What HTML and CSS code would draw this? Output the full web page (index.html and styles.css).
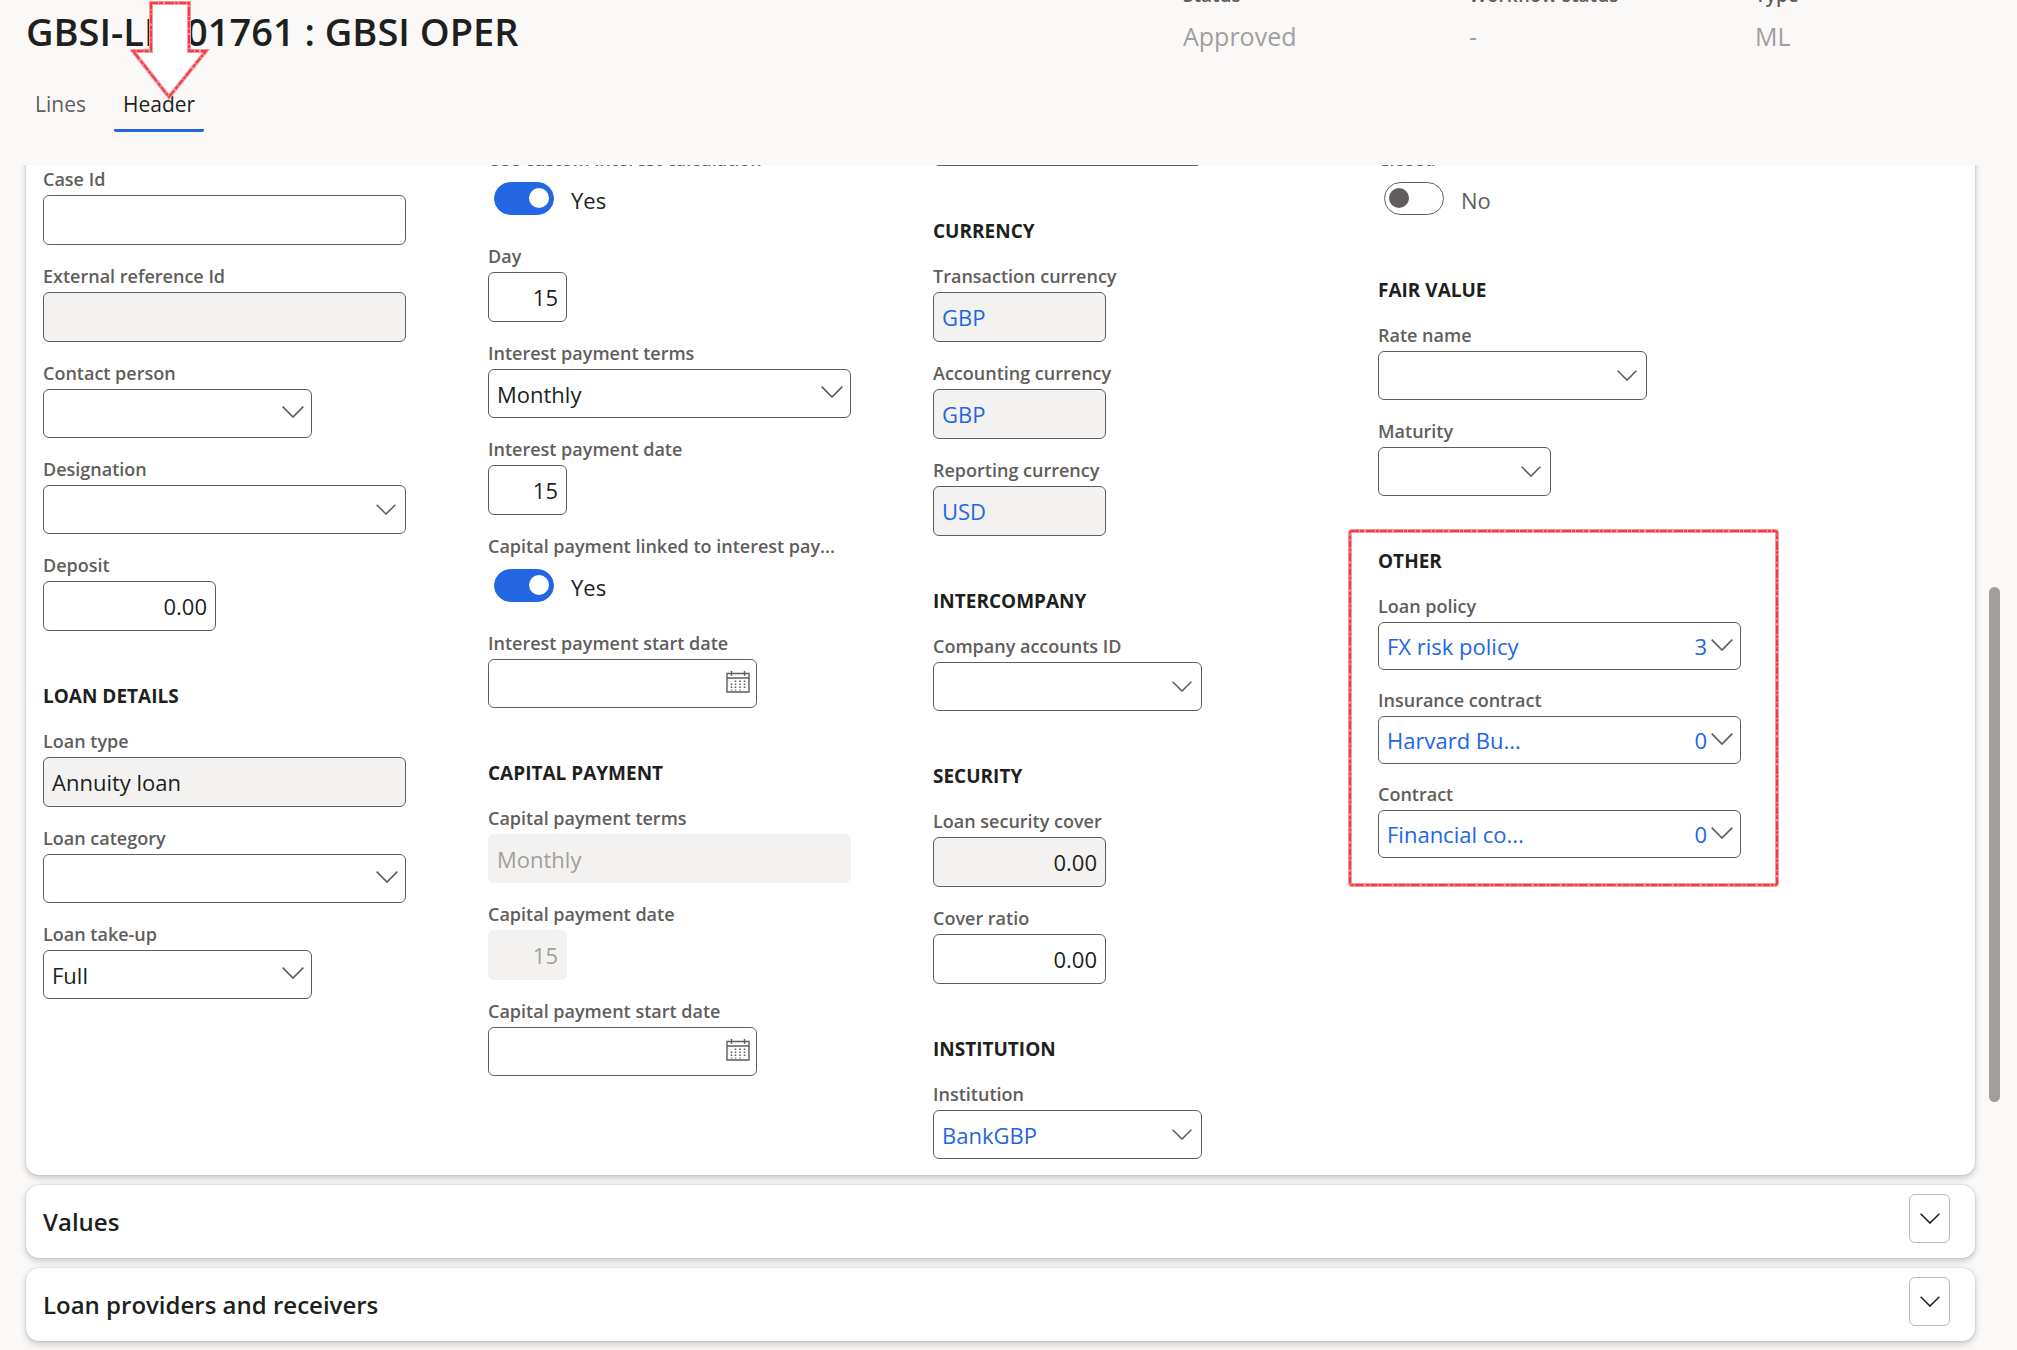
FILE: index.html
```html
<!DOCTYPE html>
<html lang="en">

<head>
    <meta charset="UTF-8">
    <meta name="viewport" content="width=device-width, initial-scale=1.0">
    <title>GBSI-LN-01761 : GBSI OPER</title>
    <link rel="stylesheet" href="styles.css">
</head>

<body>
    <!-- shared icons -->
    <svg class="icon-defs" aria-hidden="true">
        <symbol id="chevron" viewBox="0 0 22 12">
            <path d="M.7 .7 11 11 21.3 .7" fill="none" stroke="currentColor" stroke-width="1.7" />
        </symbol>
        <symbol id="calendar" viewBox="0 0 24 22">
            <path d="M1 2.5h22v18.5H1zM1 7h22M5.5 0v5M18.5 0v5" fill="none" stroke="currentColor" stroke-width="1.4" />
            <path d="M9.5 9.5v10M14 9.5v10M18.5 9.5v7.5M5.5 12.5v7" fill="none" stroke="currentColor" stroke-width="1.6" stroke-dasharray="1.6 1.4" />
        </symbol>
    </svg>

    <header class="page-header">
        <div class="title-row">
            <h1 class="page-title">GBSI-LN-01761 : GBSI OPER</h1>
            <dl class="stats">
                <div class="stat">
                    <dt>Status</dt>
                    <dd>Approved</dd>
                </div>
                <div class="stat">
                    <dt>Workflow status</dt>
                    <dd>-</dd>
                </div>
                <div class="stat">
                    <dt>Type</dt>
                    <dd>ML</dd>
                </div>
            </dl>
        </div>
        <nav class="tabs">
            <a class="tab" href="#lines">Lines</a>
            <a class="tab tab-active" href="#header">Header</a>
        </nav>
        <svg class="arrow" viewBox="0 0 80 102" aria-hidden="true">
            <path class="sketch-base" d="M21 3h38v48h17L39 97 3 51h18z" />
            <path class="sketch-line" d="M21 3h38v48h17L39 97 3 51h18z" />
        </svg>
    </header>

    <main class="page-body">
        <section class="card card-form">
            <div class="column column-loan">
                <div class="group">
                    <div class="field">
                        <label for="case-id">Case Id</label>
                        <input class="box" id="case-id" type="text">
                    </div>
                    <div class="field">
                        <label for="external-id">External reference Id</label>
                        <input class="box" id="external-id" type="text" readonly>
                    </div>
                    <div class="field">
                        <label for="contact">Contact person</label>
                        <div class="picker w-medium">
                            <select class="box" id="contact"><option></option></select>
                            <svg class="chevron"><use href="#chevron" /></svg>
                        </div>
                    </div>
                    <div class="field">
                        <label for="designation">Designation</label>
                        <div class="picker picker-lookup">
                            <select class="box" id="designation"><option></option></select>
                            <svg class="chevron"><use href="#chevron" /></svg>
                        </div>
                    </div>
                    <div class="field">
                        <label for="deposit">Deposit</label>
                        <input class="box number w-small" id="deposit" type="text" value="0.00">
                    </div>
                </div>
                <div class="group">
                    <h2>LOAN DETAILS</h2>
                    <div class="field">
                        <label for="loan-type">Loan type</label>
                        <input class="box" id="loan-type" type="text" value="Annuity loan" readonly>
                    </div>
                    <div class="field">
                        <label for="loan-category">Loan category</label>
                        <div class="picker">
                            <select class="box" id="loan-category"><option></option></select>
                            <svg class="chevron"><use href="#chevron" /></svg>
                        </div>
                    </div>
                    <div class="field">
                        <label for="take-up">Loan take-up</label>
                        <div class="picker w-medium">
                            <select class="box" id="take-up"><option>Full</option></select>
                            <svg class="chevron"><use href="#chevron" /></svg>
                        </div>
                    </div>
                </div>
            </div>

            <div class="column column-payment">
                <div class="group">
                    <div class="field">
                        <label for="custom-interest">Use custom interest calculation</label>
                        <div class="toggle">
                            <input id="custom-interest" type="checkbox" checked>
                            <span>Yes</span>
                        </div>
                    </div>
                    <div class="field">
                        <label for="day">Day</label>
                        <input class="box number w-tiny" id="day" type="text" value="15">
                    </div>
                    <div class="field">
                        <label for="interest-terms">Interest payment terms</label>
                        <div class="picker">
                            <select class="box" id="interest-terms"><option>Monthly</option></select>
                            <svg class="chevron"><use href="#chevron" /></svg>
                        </div>
                    </div>
                    <div class="field">
                        <label for="interest-date">Interest payment date</label>
                        <input class="box number w-tiny" id="interest-date" type="text" value="15">
                    </div>
                    <div class="field">
                        <label for="linked">Capital payment linked to interest pay...</label>
                        <div class="toggle">
                            <input id="linked" type="checkbox" checked>
                            <span>Yes</span>
                        </div>
                    </div>
                    <div class="field">
                        <label for="interest-start">Interest payment start date</label>
                        <div class="picker w-medium">
                            <input class="box" id="interest-start" type="text">
                            <button class="calendar" type="button" aria-label="Choose date"><svg><use href="#calendar" /></svg></button>
                        </div>
                    </div>
                </div>
                <div class="group">
                    <h2>CAPITAL PAYMENT</h2>
                    <div class="field">
                        <label for="capital-terms">Capital payment terms</label>
                        <select class="box" id="capital-terms" disabled><option>Monthly</option></select>
                    </div>
                    <div class="field">
                        <label for="capital-date">Capital payment date</label>
                        <input class="box number w-tiny" id="capital-date" type="text" value="15" disabled>
                    </div>
                    <div class="field">
                        <label for="capital-start">Capital payment start date</label>
                        <div class="picker w-medium">
                            <input class="box" id="capital-start" type="text">
                            <button class="calendar" type="button" aria-label="Choose date"><svg><use href="#calendar" /></svg></button>
                        </div>
                    </div>
                </div>
            </div>

            <div class="column">
                <div class="group">
                    <div class="field">
                        <div class="picker picker-lookup w-medium">
                            <input class="box" type="text" aria-label="Lookup">
                        </div>
                    </div>
                </div>
                <div class="group">
                    <h2>CURRENCY</h2>
                    <div class="field">
                        <label for="transaction-currency">Transaction currency</label>
                        <input class="box link w-small" id="transaction-currency" type="text" value="GBP" readonly>
                    </div>
                    <div class="field">
                        <label for="accounting-currency">Accounting currency</label>
                        <input class="box link w-small" id="accounting-currency" type="text" value="GBP" readonly>
                    </div>
                    <div class="field">
                        <label for="reporting-currency">Reporting currency</label>
                        <input class="box link w-small" id="reporting-currency" type="text" value="USD" readonly>
                    </div>
                </div>
                <div class="group">
                    <h2>INTERCOMPANY</h2>
                    <div class="field">
                        <label for="company">Company accounts ID</label>
                        <div class="picker picker-lookup w-medium">
                            <select class="box" id="company"><option></option></select>
                            <svg class="chevron"><use href="#chevron" /></svg>
                        </div>
                    </div>
                </div>
                <div class="group">
                    <h2>SECURITY</h2>
                    <div class="field">
                        <label for="security-cover">Loan security cover</label>
                        <input class="box number w-small" id="security-cover" type="text" value="0.00" readonly>
                    </div>
                    <div class="field">
                        <label for="cover-ratio">Cover ratio</label>
                        <input class="box number w-small" id="cover-ratio" type="text" value="0.00">
                    </div>
                </div>
                <div class="group">
                    <h2>INSTITUTION</h2>
                    <div class="field">
                        <label for="institution">Institution</label>
                        <div class="picker picker-lookup w-medium">
                            <select class="box link" id="institution"><option>BankGBP</option></select>
                            <svg class="chevron"><use href="#chevron" /></svg>
                        </div>
                    </div>
                </div>
            </div>

            <div class="column column-payment">
                <div class="group">
                    <div class="field">
                        <label for="closed">Closed</label>
                        <div class="toggle">
                            <input id="closed" type="checkbox">
                            <span>No</span>
                        </div>
                    </div>
                </div>
                <div class="group">
                    <h2>FAIR VALUE</h2>
                    <div class="field">
                        <label for="rate-name">Rate name</label>
                        <div class="picker picker-lookup w-medium">
                            <select class="box" id="rate-name"><option></option></select>
                            <svg class="chevron"><use href="#chevron" /></svg>
                        </div>
                    </div>
                    <div class="field">
                        <label for="maturity">Maturity</label>
                        <div class="picker picker-lookup w-small">
                            <select class="box" id="maturity"><option></option></select>
                            <svg class="chevron"><use href="#chevron" /></svg>
                        </div>
                    </div>
                </div>
                <div class="group group-marked">
                    <h2>OTHER</h2>
                    <div class="field">
                        <label for="loan-policy">Loan policy</label>
                        <div class="picker">
                            <select class="box link" id="loan-policy"><option>FX risk policy</option></select>
                            <span class="count">3</span>
                            <svg class="chevron"><use href="#chevron" /></svg>
                        </div>
                    </div>
                    <div class="field">
                        <label for="insurance">Insurance contract</label>
                        <div class="picker">
                            <select class="box link" id="insurance"><option>Harvard Bu...</option></select>
                            <span class="count">0</span>
                            <svg class="chevron"><use href="#chevron" /></svg>
                        </div>
                    </div>
                    <div class="field">
                        <label for="contract">Contract</label>
                        <div class="picker">
                            <select class="box link" id="contract"><option>Financial co...</option></select>
                            <span class="count">0</span>
                            <svg class="chevron"><use href="#chevron" /></svg>
                        </div>
                    </div>
                    <svg class="mark" aria-hidden="true">
                        <rect class="sketch-base" width="100%" height="100%" rx="2" />
                        <rect class="sketch-line" width="100%" height="100%" rx="2" />
                    </svg>
                </div>
            </div>
        </section>

        <section class="card card-closed">
            <h2>Values</h2>
            <button class="expand" type="button" aria-label="Expand Values"><svg><use href="#chevron" /></svg></button>
        </section>

        <section class="card card-closed">
            <h2>Loan providers and receivers</h2>
            <button class="expand" type="button" aria-label="Expand Loan providers and receivers"><svg><use href="#chevron" /></svg></button>
        </section>

        <div class="scroll-thumb"></div>
    </main>
</body>

</html>
```
FILE: styles.css
```css
* {
    box-sizing: border-box;
}

html,
body {
    height: 100%;
    margin: 0;
}

body {
    display: flex;
    flex-direction: column;
    overflow: hidden;

    background-color: #faf9f8;
    color: #201f1e;
    font-family: "Open Sans", "Noto Sans", sans-serif;
    font-size: 22px;
}

h1,
h2,
dl,
dd {
    margin: 0;
}

.icon-defs {
    display: none;
}

/* header */
.page-header {
    position: relative;
    padding: 5px 0 33px 26px;
}

.title-row {
    display: flex;
    align-items: flex-start;
}

.page-title {
    flex: 1;
    font-size: 38px;
    font-weight: 600;
    line-height: 52px;
}

.stats {
    display: flex;
    margin-top: -21px;
}

.stat {
    width: 286px;
}

.stat:last-child {
    width: 262px;
}

.stat dt {
    margin-bottom: 13px;
    color: #605e5c;
    font-size: 19px;
    font-weight: 600;
    line-height: 22px;
}

.stat dd {
    color: #a19f9d;
    font-size: 25px;
    line-height: 34px;
}

.tabs {
    display: flex;
    gap: 19px;
    margin-top: 33px;
}

.tab {
    padding: 0 9px 11px;
    border-bottom: 3px solid transparent;
    border-radius: 2px;
    color: #605e5c;
    font-size: 21px;
    line-height: 28px;
    text-decoration: none;
}

.tab-active {
    border-bottom-color: #2266e3;
    color: #201f1e;
}

/* hand drawn markers */
.arrow {
    position: absolute;
    left: 130px;
    top: 0;
    width: 80px;
    height: 102px;
}

.sketch-base {
    fill: none;
    stroke: #f79a9e;
    stroke-width: 4;
}

.arrow .sketch-base {
    fill: #fff;
}

.sketch-line {
    fill: none;
    stroke: #ee3d48;
    stroke-width: 2;
    stroke-dasharray: 7 1 4 2 9 1 3 1;
}

.group-marked {
    position: relative;
}

.mark {
    position: absolute;
    top: -17px;
    left: -28px;
    width: calc(100% + 64px);
    height: calc(100% + 44px);
    overflow: visible;
    pointer-events: none;
}

/* body */
.page-body {
    position: relative;
    flex: 1;
    overflow: hidden;
    padding: 0 42px 0 26px;
}

.card {
    margin-bottom: 10px;
    border-radius: 13px;
    background-color: #fff;
    box-shadow: 0 3px 7px rgba(0, 0, 0, .2), 0 0 2px rgba(0, 0, 0, .2);
}

/* the form is scrolled a little under the header */
.card-form {
    display: grid;
    grid-template-columns: repeat(auto-fill, 363px);
    column-gap: 82px;
    margin-top: -48px;
    padding: 0 17px;
}

.column-loan {
    padding-top: 50px;
}

.column-payment {
    padding-top: 30px;
}

.group + .group {
    margin-top: 52px;
}

.group h2 {
    margin-bottom: 20px;
    font-size: 19px;
    font-weight: 700;
    line-height: 26px;
}

.field {
    margin-bottom: 19px;
}

.group:last-child .field:last-child {
    margin-bottom: 16px;
}

.field label {
    display: block;
    margin-bottom: 4px;
    color: #605e5c;
    font-size: 18px;
    font-weight: 600;
    line-height: 24px;
    white-space: nowrap;
}

.box {
    display: block;
    width: 100%;
    height: 50px;
    margin: 0;
    padding: 0 8px;
    border: 1px solid #605e5c;
    border-radius: 6px;
    background-color: #fff;
    color: #201f1e;
    font: inherit;
    appearance: none;
}

.box:read-only:not(select) {
    background-color: #f3f2f1;
}

.box:disabled {
    border-color: #f3f2f1;
    background-color: #f3f2f1;
    color: #a19f9d;
    opacity: 1;
}

.box.link {
    color: #2266e3;
}

.number {
    text-align: right;
}

.w-medium {
    width: 269px;
}

.w-small {
    width: 173px;
}

.w-tiny {
    width: 79px;
}

select.box,
.picker .box {
    height: 49px;
}

.picker {
    position: relative;
}

.chevron {
    position: absolute;
    right: 8px;
    top: 17px;
    width: 22px;
    height: 12px;
    color: #605e5c;
    pointer-events: none;
}

.picker-lookup .chevron {
    right: 10px;
    top: 19px;
    width: 20px;
    height: 11px;
}

.count {
    position: absolute;
    right: 34px;
    top: 9px;
    color: #2266e3;
    line-height: 30px;
    pointer-events: none;
}

.group-marked .field {
    margin-bottom: 18px;
}

.group-marked .picker .box {
    height: 48px;
}

.calendar {
    position: absolute;
    right: 7px;
    top: 12px;
    width: 24px;
    height: 22px;
    padding: 0;
    border: 0;
    background: none;
    color: #605e5c;
}

.calendar svg {
    display: block;
    width: 24px;
    height: 22px;
}

.toggle {
    display: flex;
    gap: 17px;
    height: 50px;
    padding: 7px 6px 0;
    line-height: 36px;
}

.toggle input {
    width: 60px;
    height: 33px;
    margin: 0;
    padding: 5px 4px;
    border: 1px solid #605e5c;
    border-radius: 17px;
    background-color: #fff;
    appearance: none;
}

.toggle input::before {
    content: "";
    display: block;
    width: 20px;
    height: 20px;
    border-radius: 50%;
    background-color: #605e5c;
}

.toggle input:checked {
    border-color: #2266e3;
    background-color: #2266e3;
}

.toggle input:checked::before {
    margin-left: auto;
    background-color: #fff;
}

.toggle input:not(:checked) + span {
    color: #605e5c;
}

/* collapsed cards */
.card-closed {
    display: flex;
    align-items: center;
    justify-content: space-between;
    height: 73px;
    padding: 0 25px 0 17px;
}

.card-closed h2 {
    font-size: 24px;
    font-weight: 600;
}

.expand {
    display: flex;
    align-items: center;
    justify-content: center;
    width: 41px;
    height: 49px;
    margin-bottom: 6px;
    padding: 0;
    border: 1px solid #bab8b7;
    border-radius: 6px;
    background-color: #fff;
    color: #201f1e;
}

.expand svg {
    width: 20px;
    height: 11px;
}

.scroll-thumb {
    position: absolute;
    top: 35.6%;
    right: 17px;
    width: 11px;
    height: 43.5%;
    border-radius: 6px;
    background-color: #a19f9d;
}
```
